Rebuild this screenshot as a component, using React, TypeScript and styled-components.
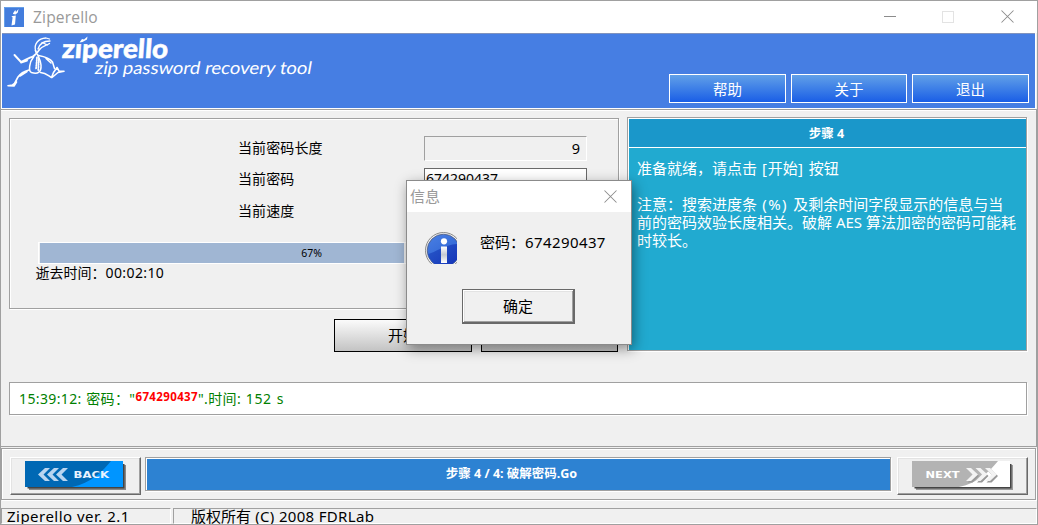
import React from "react";
import styled, { createGlobalStyle, css } from "styled-components";

const GlobalStyle = createGlobalStyle`
  *, *::before, *::after { box-sizing: border-box; }
  html, body { margin: 0; padding: 0; }
  body { width: 1038px; height: 525px; overflow: hidden; }
  button { font: inherit; padding: 0; margin: 0; border-radius: 0; }
`;

const face = "#f0f0f0";
const shade = "#a0a0a0";

const etched = css`
  border: 1px solid ${shade};
  box-shadow: 1px 1px 0 #fff, inset 1px 1px 0 #fff;
`;

const Window = styled.div`
  position: relative;
  display: flex;
  flex-direction: column;
  width: 1038px;
  height: 525px;
  overflow: hidden;
  background: ${face};
  border: 1px solid ${shade};
  color: #000;
  font: 14px/18px "Noto Sans", "Noto Sans CJK SC", sans-serif;
  white-space: nowrap;
`;

const Latin = styled.span<{ $spacing: number }>`
  letter-spacing: ${(p) => p.$spacing}px;
`;

const TitleBar = styled.header`
  flex: none;
  display: flex;
  align-items: center;
  height: 32px;
  padding: 0 23px 0 3px;
  background: #fff;
`;

const WindowTitle = styled.h1`
  flex: 1;
  margin: -1px 0 0 9px;
  color: #999;
  font: 400 15.6px/20px "Open Sans", sans-serif;
  letter-spacing: 0.15px;
`;

const WindowControls = styled.div`
  display: flex;
  align-items: center;
  gap: 46px;
  height: 32px;
  margin-top: -1px;
  svg { display: block; }
  svg:last-child { margin-left: 1px; }
`;

const Banner = styled.div`
  flex: none;
  display: flex;
  justify-content: space-between;
  height: 76px;
  padding: 0 6px 0 0;
  background: #467ee3;
  border-left: 1px solid #fff;
  border-right: 1px solid #fff;
  border-bottom: 1px solid #fff;
  box-shadow: inset 0 1px 0 #8093be;
  width: 1035px;
`;

const BannerActions = styled.nav`
  display: flex;
  align-items: flex-start;
  gap: 5px;
  padding-top: 41px;
`;

const BannerButton = styled.button<{ $width: number }>`
  width: ${(p) => p.$width}px;
  height: 29px;
  border: 1px solid #fff;
  background: linear-gradient(#61a0e8, #1a5ee6);
  color: #fff;
  font-size: 14.5px;
  line-height: 28px;
`;

const Body = styled.main`
  flex: none;
  height: 338px;
  padding: 7px 8px 0 8px;
  border-top: 1px solid ${shade};
  border-right: 1px solid ${shade};
  border-bottom: 1px solid ${shade};
  box-shadow: inset 0 1px 0 #fff;
`;

const Columns = styled.div`
  display: flex;
  gap: 8px;
  height: 235px;
`;

const Work = styled.section`
  width: 610px;
  padding-top: 1px;
`;

const ProgressPanel = styled.div`
  height: 191px;
  padding: 17px 31px 0 26px;
  ${etched}
`;

const FieldGrid = styled.div`
  display: grid;
  grid-template-columns: 186px 163px;
  grid-template-rows: 25px 24px 26px;
  row-gap: 7px;
  align-items: center;
  padding-left: 202px;
`;

const FieldLabel = styled.label`
  font-size: 14px;
  line-height: 18px;
  letter-spacing: 0.1px;
  padding-bottom: 2px;
`;

const Readout = styled.output`
  height: 25px;
  padding: 0 6px;
  border: 1px solid #fff;
  border-top-color: ${shade};
  border-left-color: ${shade};
  text-align: right;
  font-size: 14.5px;
  line-height: 23px;
`;

const PasswordBox = styled.div`
  height: 24px;
  padding-left: 1px;
  border: 1px solid #696969;
  background: #fff;
  font-size: 14px;
  line-height: 20px;
`;

const ProgressTrack = styled.div`
  display: flex;
  position: relative;
  width: 547px;
  height: 22px;
  margin: 17px 0 0 2px;
  padding-left: 1px;
  border: 1px solid #fff;
`;

const ProgressFill = styled.div`
  width: 364px;
  background: #a0b6d3;
`;

const ProgressText = styled.span`
  position: absolute;
  inset: 0;
  text-align: center;
  font-size: 10.5px;
  line-height: 21px;
`;

const Elapsed = styled.div`
  margin-left: -0.5px;
  font-size: 14px;
  line-height: 17px;
`;

const WorkActions = styled.div`
  display: flex;
  justify-content: flex-end;
  gap: 9px;
  padding: 10px 1px 0 0;
`;

const WorkButton = styled.button<{ $width: number }>`
  width: ${(p) => p.$width}px;
  height: 33px;
  border: 1px solid #000;
  background: linear-gradient(#fbfbfb, #c3c3c3);
  color: #000;
  font-size: 15px;
  line-height: 31px;
`;

const HelpPanel = styled.aside`
  width: 400px;
  height: 234px;
  padding: 1px 0 0 1px;
  background: #21aad0;
  ${etched}
`;

const HelpTitle = styled.h2`
  height: 29px;
  margin: 0;
  padding-right: 2px;
  border-bottom: 1px solid #fff;
  background: #1a97ca;
  color: #fff;
  text-align: center;
  font-size: 12.5px;
  font-weight: 700;
  line-height: 29px;
`;

const HelpText = styled.div`
  padding: 11px 0 0 8px;
  color: #fff;
  font-size: 15px;
  line-height: 18px;
  p { margin: 0 0 18px; }
`;

const Log = styled.div`
  height: 33px;
  width: 1018px;
  margin-top: 30px;
  padding-left: 9px;
  background: #fff;
  color: #008000;
  font-size: 14px;
  line-height: 31px;
  letter-spacing: 0.37px;
  word-spacing: 0.6px;
  ${etched}
`;

const Found = styled.b`
  position: relative;
  top: -3px;
  color: #f00;
  font-size: 11.5px;
`;

const Navigation = styled.footer`
  flex: none;
  display: flex;
  align-items: flex-start;
  height: 52px;
  margin-top: 1px;
  padding: 8px 7px 0 8px;
  width: 1035px;
  ${etched}
`;

const NavButton = styled.button`
  flex: none;
  width: 131px;
  height: 38px;
  border: 1px solid #696969;
  border-top-color: #fff;
  border-left-color: #fff;
  background: ${face};
  box-shadow: inset -1px -1px 0 ${shade}, inset 1px 1px 0 #e3e3e3;
  svg { display: block; margin: 0 0 0 14px; }
`;

const StepBar = styled.div`
  flex: none;
  width: 746px;
  height: 34px;
  margin: 0 6px 0 4px;
  border: 1px solid ${shade};
  box-shadow: 1px 1px 0 #fff, inset 1px 1px 0 #fff;
  background: #2d82d2;
  color: #fff;
  text-align: center;
  padding-right: 13px;
  font-size: 12.5px;
  font-weight: 700;
  line-height: 31px;
`;

const StatusBar = styled.div`
  display: flex;
  gap: 2px;
  flex: 1;
  padding-top: 8px;
`;

const StatusPane = styled.div<{ $width?: number; $indent: number }>`
  ${(p) => (p.$width ? `width: ${p.$width}px;` : "flex: 1;")}
  height: 16px;
  padding-left: ${(p) => p.$indent}px;
  border: 1px solid #fff;
  border-top-color: ${shade};
  border-left-color: ${shade};
  font-size: 15px;
  line-height: 15px;
`;

const Dialog = styled.div`
  position: absolute;
  left: 405px;
  top: 179px;
  width: 226px;
  height: 165px;
  border: 1px solid #8b8b8b;
  background: ${face};
  box-shadow: 2px 4px 12px rgba(0, 0, 0, 0.42);
`;

const DialogTitle = styled.div`
  display: flex;
  align-items: center;
  justify-content: space-between;
  height: 31px;
  padding: 0 14px 1px 3px;
  background: #fff;
  color: #999;
  font-size: 15px;
`;

const DialogMessage = styled.div`
  display: flex;
  gap: 23px;
  padding: 19px 0 0 18px;
  font-size: 15px;
  line-height: 23px;
  svg { display: block; margin-top: 1px; }
`;

const ConfirmButton = styled.button`
  display: block;
  width: 113px;
  height: 35px;
  margin: 25px 0 0 55px;
  padding: 0 1px 2px 0;
  border: 1px solid #696969;
  background: ${face};
  box-shadow: inset -1px -1px 0 #696969, inset 1px 1px 0 #fff, inset -2px -2px 0 ${shade}, inset 2px 2px 0 #e3e3e3;
  color: #000;
  font-size: 15px;
  line-height: 30px;
`;

const AppIcon = () => (
  <svg width="20" height="20" viewBox="0 0 20 20">
    <rect width="20" height="20" fill="#437ddd" />
    <path d="M.5 20V.5H20" fill="none" stroke="#67a0e8" />
    <path d="M7.400 9.200 11.800 8.400 11 17.400 7.500 18.600 8.600 10.500ZM9.200 6 11.300 3 12 5 14.500 2 13.800 5.400 11.500 7.400 9 7Z" fill="#fff" />
  </svg>
);

const CloseIcon = () => (
  <svg width="13" height="13" viewBox="0 0 13 13">
    <path d="M.5.5 12.5 12.5M12.5.5.5 12.5" stroke="#8c8c8c" strokeWidth="1.05" fill="none" />
  </svg>
);

const Logo = () => (
  <svg width="320" height="72" viewBox="2 33 320 72">
    <g fill="none" stroke="#fff" strokeLinecap="round" strokeLinejoin="round">
      <path d="M35.500 50.500C34 44 38 38.500 46 38L49.500 39M38 49C39.500 44 43 41 50 41M39.500 49.500C42 46 46 46 49.500 43.500M42 42.500 47.500 45" strokeWidth="1.3" />
      <path d="M35.500 50.500 36.500 53.500 39.500 49.500M36.500 53.500 33.500 56" strokeWidth="1.7" />
      <path d="M33.500 56.500C28 57.500 24 61.500 21 62L14.500 55M21 62.500 27 60.500" strokeWidth="1.9" />
      <path d="M33.500 57C29.500 62 28 71 31.500 72.500 38 74.500 41.500 72 41 65 40.500 60 38.500 57 37.500 54.500" strokeWidth="1.5" />
      <path d="M37 57.500 36 69.500M38.800 59 38.300 70" strokeWidth="1.8" strokeDasharray="1 1.500" />
      <path d="M38.500 55.500C44 56.500 50 58.500 52.500 62L54.500 68.500M46 58.500 51 63" strokeWidth="1.5" />
      <path d="M29 70C23 71.500 20 74 18 77L14.500 83.500 12.500 85 8 85.700 14 86 16.500 82M27 71.500 20 76" strokeWidth="1.6" />
      <path d="M40.500 72.500C46 73 48 75.500 51.500 77.500L53.500 72.500 57 67.500 59 71 64 71.300 58 72.500 52 77.500" strokeWidth="1.6" />
    </g>
    <g fill="#fff">
      <text transform="translate(61.500 57.500) skewX(-4)" fontFamily="Lato" fontWeight="900" fontSize="26.500" textLength="106" lengthAdjust="spacingAndGlyphs" stroke="#fff" strokeWidth=".5">zıperello</text>
      <path d="M79.500 42.500 82 39 84 39.500 87.500 36.500 87 39.500 82.500 42Z" />
      <text transform="translate(94 74) skewX(-10)" fontFamily="Lato" fontSize="17.500" textLength="217" lengthAdjust="spacingAndGlyphs">zip password recovery tool</text>
    </g>
  </svg>
);

const chevrons = [0, 1, 2];

const BackGraphic = () => (
  <svg width="103" height="31" viewBox="0 0 103 31">
    <path d="M4 4H101V29H4Z" fill="#888" />
    <path d="M2.500 3H99.500V27.500H2.500Z" fill="#444" />
    <rect width="98" height="26" fill="#0068b4" />
    <path d="M86 0H98V26H47C66 22 78 10 86 0Z" fill="#0095ff" />
    {chevrons.map((i) => (
      <path key={i} transform={`translate(${13 + i * 9} 7)`} d="M7 0H12L5.500 6.500 12 13H7L0 6.500Z" fill="#b9d5f0" />
    ))}
    <text x="48.500" y="17" fill="#e9f3ff" fontFamily="DejaVu Sans" fontWeight="700" fontSize="8.800" textLength="35.500" lengthAdjust="spacingAndGlyphs">BACK</text>
  </svg>
);

const NextGraphic = () => (
  <svg width="103" height="31" viewBox="0 0 103 31">
    <path d="M4 4H101V29H4Z" fill="#999" />
    <path d="M2.500 3H99.500V27.500H2.500Z" fill="#444" />
    <rect width="98" height="26" fill="#b3b3b3" />
    <path d="M86 0H98V26H47C66 22 78 10 86 0Z" fill="#fff" />
    {chevrons.map((i) => (
      <g key={i} transform={`translate(${54 + i * 9.5} 7)`}>
        <path d="M1.500 1.500H6.500L13 8 6.500 14.500H1.500L8 8Z" fill="#999" />
        <path d="M0 0H5L12 6.500 5 13H0L6.500 6.500Z" fill="#f3f3f3" />
      </g>
    ))}
    <text x="13.500" y="17" fill="#fff" fontFamily="DejaVu Sans" fontWeight="700" fontSize="8.800" textLength="34" lengthAdjust="spacingAndGlyphs">NEXT</text>
  </svg>
);

const InfoIcon = () => (
  <svg width="32" height="32" viewBox="0 0 32 32">
    <defs>
      <linearGradient id="disc" x1="0" y1="0" x2="0.6" y2="1">
        <stop offset="0" stopColor="#4a80e4" />
        <stop offset="1" stopColor="#2a5fd0" />
      </linearGradient>
      <linearGradient id="gloom" x1="0" y1="0.3" x2="1" y2="1">
        <stop offset="0" stopColor="#2757c8" />
        <stop offset="1" stopColor="#1535b8" />
      </linearGradient>
      <linearGradient id="stem" x1="0" y1="0" x2="0" y2="1">
        <stop offset="0" stopColor="#fff" />
        <stop offset=".5" stopColor="#c5c9d2" />
        <stop offset="1" stopColor="#fff" />
      </linearGradient>
      <clipPath id="face">
        <circle cx="18.500" cy="18.500" r="16" />
      </clipPath>
    </defs>
    <circle cx="18.500" cy="18.500" r="18" fill="#eee" stroke="#888" />
    <circle cx="18.500" cy="18.500" r="16.300" fill="url(#disc)" stroke="#4d5b80" strokeWidth=".8" />
    <path d="M0 23C10 21 18 13 32 12V32H0Z" fill="url(#gloom)" clipPath="url(#face)" />
    <circle cx="19" cy="9.300" r="3.100" fill="#fff" />
    <path d="M16 14.500H22V31H16Z" fill="url(#stem)" />
  </svg>
);

export default function App() {
  return (
    <>
      <GlobalStyle />
      <Window>
        <TitleBar>
          <AppIcon />
          <WindowTitle>Ziperello</WindowTitle>
          <WindowControls>
            <svg width="12" height="12"><path d="M0 5.500H12" stroke="#8c8c8c" /></svg>
            <svg width="12" height="12"><rect x=".5" y=".5" width="11" height="11" fill="none" stroke="#e3e3e3" /></svg>
            <CloseIcon />
          </WindowControls>
        </TitleBar>
        <Banner>
          <Logo />
          <BannerActions>
            <BannerButton $width={117}>帮助</BannerButton>
            <BannerButton $width={116}>关于</BannerButton>
            <BannerButton $width={117}>退出</BannerButton>
          </BannerActions>
        </Banner>
        <Body>
          <Columns>
            <Work>
              <ProgressPanel>
                <FieldGrid>
                  <FieldLabel>当前密码长度</FieldLabel>
                  <Readout>9</Readout>
                  <FieldLabel>当前密码</FieldLabel>
                  <PasswordBox>674290437</PasswordBox>
                  <FieldLabel>当前速度</FieldLabel>
                </FieldGrid>
                <ProgressTrack>
                  <ProgressFill />
                  <ProgressText>67%</ProgressText>
                </ProgressTrack>
                <Elapsed>逝去时间：<Latin $spacing={0.4}>00:02:10</Latin></Elapsed>
              </ProgressPanel>
              <WorkActions>
                <WorkButton $width={138}>开始</WorkButton>
                <WorkButton $width={137} />
              </WorkActions>
            </Work>
            <HelpPanel>
              <HelpTitle>步骤 4</HelpTitle>
              <HelpText>
                <p>
                  准备就绪，请点击<Latin $spacing={1}> [</Latin>开始<Latin $spacing={1}>] </Latin>按钮
                </p>
                <p>
                  注意：搜索进度条<Latin $spacing={1.4}> (%) </Latin>及剩余时间字段显示的信息与当<br />
                  前的密码效验长度相关。破解 AES 算法加密的密码可能耗<br />
                  时较长。
                </p>
              </HelpText>
            </HelpPanel>
          </Columns>
          <Log>
            15:39:12: 密码："<Found>674290437</Found>".时间: <Latin $spacing={0.7}>152 s</Latin>
          </Log>
        </Body>
        <Navigation>
          <NavButton><BackGraphic /></NavButton>
          <StepBar>步骤 4 / 4: 破解密码.Go</StepBar>
          <NavButton><NextGraphic /></NavButton>
        </Navigation>
        <StatusBar>
          <StatusPane $width={170} $indent={5}><Latin $spacing={0.48}>Ziperello ver. 2.1</Latin></StatusPane>
          <StatusPane $indent={17}>版权所有<Latin $spacing={0.32}> (C) 2008 FDRLab</Latin></StatusPane>
        </StatusBar>
        <Dialog role="dialog">
          <DialogTitle>
            信息
            <CloseIcon />
          </DialogTitle>
          <DialogMessage>
            <InfoIcon />
            <span>密码：<Latin $spacing={0.4}>674290437</Latin></span>
          </DialogMessage>
          <ConfirmButton>确定</ConfirmButton>
        </Dialog>
      </Window>
    </>
  );
}
